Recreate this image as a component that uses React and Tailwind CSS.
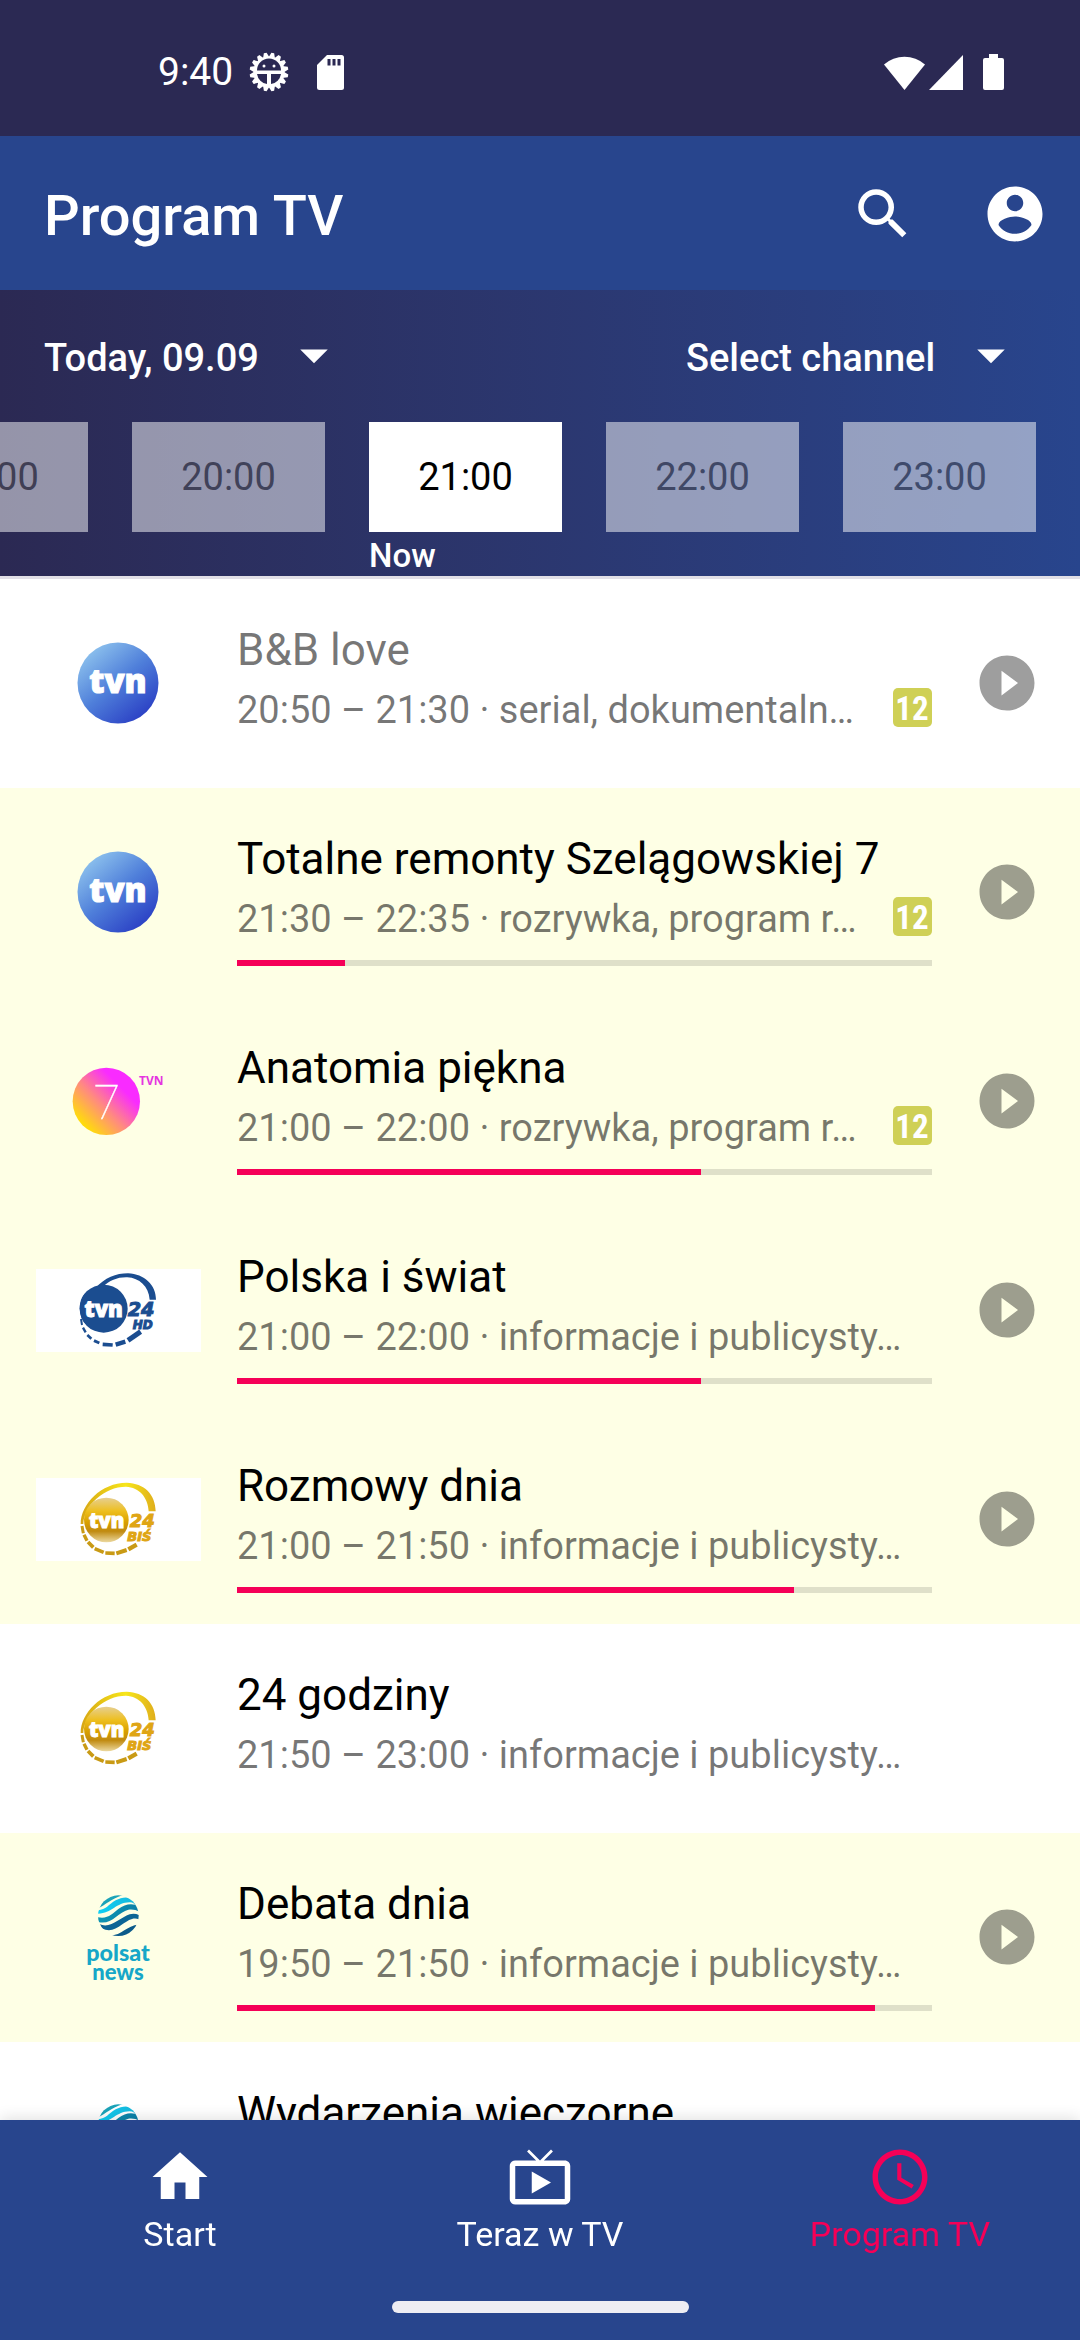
import React from "react";

const PATHS = {
  search:
    "M15.5 14h-.79l-.28-.27A6.471 6.471 0 0 0 16 9.5 6.5 6.5 0 1 0 9.5 16c1.61 0 3.09-.59 4.23-1.57l.27.28v.79l5 4.99L20.49 19l-4.99-5zm-6 0C7.01 14 5 11.99 5 9.5S7.01 5 9.5 5 14 7.01 14 9.5 11.99 14 9.5 14z",
  account:
    "M12 2C6.48 2 2 6.48 2 12s4.48 10 10 10 10-4.48 10-10S17.52 2 12 2zm0 3c1.66 0 3 1.34 3 3s-1.34 3-3 3-3-1.34-3-3 1.34-3 3-3zm0 14.2c-2.5 0-4.71-1.28-6-3.22.03-1.99 4-3.08 6-3.08 1.99 0 5.97 1.09 6 3.08-1.29 1.94-3.5 3.22-6 3.22z",
  dropDown: "M7 10l5 5 5-5z",
  play: "M12 2C6.48 2 2 6.48 2 12s4.48 10 10 10 10-4.48 10-10S17.52 2 12 2zm-2 14.5v-9l6 4.5-6 4.5z",
  home: "M10 20v-6h4v6h5v-8h3L12 3 2 12h3v8z",
  tv: "M21 6h-7.59l3.29-3.29L16 2l-4 4-4-4-.7.71L10.59 6H3c-1.1 0-2 .89-2 2v12c0 1.1.9 2 2 2h18c1.1 0 2-.9 2-2V8c0-1.11-.9-2-2-2zm0 14H3V8h18v12zM9 10v8l7-4z",
  clock:
    "M11.99 2C6.47 2 2 6.48 2 12s4.47 10 9.99 10C17.52 22 22 17.52 22 12S17.52 2 11.99 2zM12 20c-4.42 0-8-3.58-8-8s3.58-8 8-8 8 3.58 8 8-3.58 8-8 8zm.5-13H11v6l5.25 3.15.75-1.23-4.5-2.67z",
};

function Icon({ name, className = "" }) {
  return (
    <svg viewBox="0 0 24 24" className={`size-[66px] fill-current ${className}`} aria-hidden="true">
      <path d={PATHS[name]} />
    </svg>
  );
}

/* ---------- status bar ---------- */

function GearIcon() {
  const teeth = Array.from({ length: 16 }, (_, i) => i * 22.5 + 11.25);
  return (
    <svg viewBox="-20 -20 40 40" className="size-10" aria-hidden="true">
      <g fill="#fff">
        {teeth.map((a) => (
          <path key={a} d="M-3.4 -14 L-1.4 -19.4 H1.4 L3.4 -14Z" transform={`rotate(${a})`} />
        ))}
        <circle r="15.5" />
      </g>
      <path d="M-12 -1.5 A12 12 0 0 1 12 -1.5Z" fill="#2b2953" />
      <path d="M-12 2 H-2 V12 A12 12 0 0 1 -12 2Z" fill="#2b2953" />
      <path d="M12 2 H2 V12 A12 12 0 0 0 12 2Z" fill="#2b2953" />
      <circle cx="-5" cy="-6" r="1.5" fill="#fff" />
      <circle cx="5" cy="-6" r="1.5" fill="#fff" />
    </svg>
  );
}

function StatusBar() {
  return (
    <div className="flex h-[136px] shrink-0 items-center justify-between bg-[#2b2953] pt-2 pr-[76px] pl-[158px] text-white">
      <div className="flex items-center">
        <span className="text-[39px] leading-none">9:40</span>
        <span className="ml-4">
          <GearIcon />
        </span>
        <svg viewBox="0 0 27 35" className="ml-7 h-[35px] w-[27px]" aria-hidden="true">
          <path d="M10 0H24.5A2.5 2.5 0 0 1 27 2.5V32.5A2.5 2.5 0 0 1 24.5 35H2.5A2.5 2.5 0 0 1 0 32.5V10Z" fill="#fff" />
          <path d="M10.5 4h3v6.5h-3zM15.5 4h3v6.5h-3zM20.5 4h3v6.5h-3z" fill="#2b2953" />
        </svg>
      </div>
      <div className="flex items-center">
        <svg viewBox="0 0 41 35" className="h-[35px] w-[41px]" aria-hidden="true">
          <path d="M20.5 35L0 9.5A31 31 0 0 1 41 9.5Z" fill="#fff" />
        </svg>
        <svg viewBox="0 0 34 35" className="ml-1 h-[35px] w-[34px]" aria-hidden="true">
          <path d="M34 0V35H0Z" fill="#fff" />
        </svg>
        <svg viewBox="0 0 21 36" className="ml-5 h-9 w-[21px]" aria-hidden="true">
          <path d="M6 0h9v4h4a2 2 0 0 1 2 2v28a2 2 0 0 1-2 2H2a2 2 0 0 1-2-2V6a2 2 0 0 1 2-2h4z" fill="#fff" />
        </svg>
      </div>
    </div>
  );
}

/* ---------- channel logos ---------- */

function TvnLogo() {
  return (
    <svg viewBox="0 0 165 96" className="h-24 w-[165px]" role="img" aria-label="TVN">
      <defs>
        <linearGradient id="tvnFill" x1="0.1" y1="0.1" x2="0.8" y2="0.95">
          <stop offset="0" stopColor="#8fc4ee" />
          <stop offset="0.5" stopColor="#4f7fda" />
          <stop offset="1" stopColor="#2a3fc4" />
        </linearGradient>
      </defs>
      <circle cx="82" cy="47" r="40.5" fill="url(#tvnFill)" />
      <text
        x="82"
        y="57"
        textAnchor="middle"
        fontFamily="Open Sans"
        fontWeight="800"
        fontSize="33"
        fill="#fff"
        stroke="#fff"
        strokeWidth="1"
      >
        tvn
      </text>
    </svg>
  );
}

function Tvn7Logo() {
  return (
    <svg viewBox="0 0 495 288" className="h-24 w-[165px]" role="img" aria-label="TVN 7">
      <defs>
        <linearGradient id="tvn7Fill" x1="0.22" y1="0.9" x2="0.78" y2="0.35">
          <stop offset="0" stopColor="#ffdb0c" />
          <stop offset="0.5" stopColor="#ff8a80" />
          <stop offset="1" stopColor="#f92bff" />
        </linearGradient>
      </defs>
      <circle cx="211" cy="142" r="101" fill="url(#tvn7Fill)" />
      <text
        x="213"
        y="196"
        textAnchor="middle"
        fontFamily="Roboto"
        fontWeight="100"
        fontSize="145"
        fill="#fff"
        stroke="#fff"
        strokeWidth="1"
      >
        7
      </text>
      <text x="309" y="93" fontFamily="Open Sans" fontWeight="700" fontSize="36" fill="#e535e0">
        TVN
      </text>
    </svg>
  );
}

const DASHES_24 = [
  ["M135 150L138 168", 6],
  ["M141 176L149 190", 7],
  ["M154 198L166 209", 8],
  ["M174 215L190 222", 9],
  ["M200 226L230 228", 11],
  ["M239 227L268 218", 13],
  ["M276 214L314 188", 15],
];

function Tvn24Logo() {
  return (
    <svg viewBox="0 0 495 249" className="h-[83px] w-[165px] bg-white" role="img" aria-label="TVN 24 HD">
      <g fill="#1b4d90">
        <path d="M178 58C206 26 240 13 276 13C325 15 360 48 360 92H341C338 52 310 27 274 25C245 24 221 34 200 54Z" />
        <path d="M131 118C131 95 140 75 158 62L160 170C142 165 134 150 131 118Z" />
        <circle cx="203" cy="119" r="72" />
        {DASHES_24.map(([d, width]) => (
          <path key={d} d={d} stroke="#1b4d90" strokeWidth={width} />
        ))}
        <g fontFamily="DejaVu Sans" fontWeight="700" fontStyle="italic" stroke="#1b4d90" strokeWidth="3">
          <text x="275" y="142" fontSize="58">
            24
          </text>
          <text x="290" y="180" fontSize="36">
            HD
          </text>
        </g>
      </g>
      <text
        x="203"
        y="145"
        textAnchor="middle"
        fontFamily="Open Sans"
        fontWeight="800"
        fontSize="66"
        fill="#fff"
        stroke="#fff"
        strokeWidth="3"
      >
        tvn
      </text>
    </svg>
  );
}

const DASHES_BIS = [
  ["M138 144L142 166", 9],
  ["M144 170L153 188", 10],
  ["M156 192L172 208", 11],
  ["M176 212L203 223", 11],
  ["M208 225L236 226", 11],
  ["M241 226L272 216", 12],
  ["M277 214L302 200", 13],
];

function BisLogo() {
  return (
    <svg viewBox="0 0 495 249" className="h-[83px] w-[165px] bg-white" role="img" aria-label="TVN 24 BiS">
      <defs>
        <linearGradient id="bisBall" x1="0" y1="0" x2="0" y2="1">
          <stop offset="0" stopColor="#e6cf92" />
          <stop offset="0.3" stopColor="#eebf1e" />
          <stop offset="0.55" stopColor="#d9a000" />
          <stop offset="0.75" stopColor="#c08a10" />
          <stop offset="1" stopColor="#ecd9a0" />
        </linearGradient>
        <linearGradient id="bisRing" x1="0" y1="0" x2="1" y2="0">
          <stop offset="0" stopColor="#d6a514" />
          <stop offset="0.6" stopColor="#f7e61a" />
          <stop offset="1" stopColor="#dfae1c" />
        </linearGradient>
      </defs>
      <path
        d="M134 138C134 78 196 14 272 14C325 16 358 48 359 100H338C336 58 310 28 270 26C205 26 144 82 142 138Z"
        fill="url(#bisRing)"
      />
      <circle cx="211" cy="126" r="67" fill="url(#bisBall)" />
      {DASHES_BIS.map(([d, width]) => (
        <path key={d} d={d} stroke="#c99a14" strokeWidth={width} />
      ))}
      <g
        fontFamily="DejaVu Sans"
        fontWeight="700"
        fontStyle="italic"
        fill="#dfa514"
        stroke="#dfa514"
        strokeWidth="3"
      >
        <text x="281" y="148" fontSize="54">
          24
        </text>
        <text x="274" y="188" fontSize="39">
          BIŚ
        </text>
      </g>
      <text
        x="212"
        y="149"
        textAnchor="middle"
        fontFamily="Open Sans"
        fontWeight="800"
        fontSize="61"
        fill="#fff"
        stroke="#fff"
        strokeWidth="3"
      >
        tvn
      </text>
    </svg>
  );
}

function PolsatLogo() {
  return (
    <svg viewBox="0 0 495 288" className="h-24 w-[165px]" role="img" aria-label="Polsat News">
      <defs>
        <clipPath id="globe">
          <circle cx="0" cy="0" r="61" />
        </clipPath>
        <linearGradient id="wave2" x1="0" y1="0" x2="1" y2="0">
          <stop offset="0" stopColor="#0fd0f5" />
          <stop offset="1" stopColor="#17b6da" />
        </linearGradient>
        <linearGradient id="wave3" x1="0" y1="0" x2="1" y2="0">
          <stop offset="0" stopColor="#0f95b2" />
          <stop offset="1" stopColor="#0a7fa8" />
        </linearGradient>
      </defs>
      <g transform="translate(247 77)" clipPath="url(#globe)">
        <path d="M-60 -22C-35 -34 -25 -50 20 -64L-20 -64L-60 -40Z" fill="#1ba3b8" />
        <path d="M-64 -6C-20 -4 -8 -40 34 -40C44 -40 50 -34 56 -26L48 -48C30 -58 10 -56 -8 -46C-30 -33 -38 -16 -64 -16Z" fill="url(#wave2)" />
        <path d="M-64 18C-22 32 -2 -10 30 -18C46 -20 56 -16 66 -10V-24C46 -40 22 -36 0 -20C-18 -6 -32 12 -64 4Z" fill="url(#wave3)" />
        <path d="M-56 26C-22 40 4 6 34 -4C44 -7 56 -6 66 0V12C44 4 34 12 12 26C-10 42 -26 50 -50 38Z" fill="#0c6595" />
        <path d="M-26 60C14 58 24 28 66 26L60 42L24 66H-26Z" fill="#0b5a8a" />
      </g>
      <g fontFamily="Lato" fontWeight="900" fill="#16a7c8" textAnchor="middle">
        <text x="246" y="212" fontSize="70">
          polsat
        </text>
        <text x="246" y="270" fontSize="66">
          news
        </text>
      </g>
    </svg>
  );
}

const LOGOS = { tvn: TvnLogo, tvn7: Tvn7Logo, tvn24: Tvn24Logo, bis: BisLogo, polsat: PolsatLogo };

/* ---------- schedule ---------- */

const HOURS = ["19:00", "20:00", "21:00", "22:00", "23:00"];
const CURRENT_HOUR = "21:00";

const PROGRAMS = [
  { logo: "tvn", title: "B&B love", info: "20:50 – 21:30 · serial, dokumentaln…", age: 12, play: true, past: true },
  { logo: "tvn", title: "Totalne remonty Szelągowskiej 7", info: "21:30 – 22:35 · rozrywka, program r…", age: 12, play: true, progress: 15.5 },
  { logo: "tvn7", title: "Anatomia piękna", info: "21:00 – 22:00 · rozrywka, program r…", age: 12, play: true, progress: 66.8 },
  { logo: "tvn24", title: "Polska i świat", info: "21:00 – 22:00 · informacje i publicysty…", play: true, progress: 66.8 },
  { logo: "bis", title: "Rozmowy dnia", info: "21:00 – 21:50 · informacje i publicysty…", play: true, progress: 80.2 },
  { logo: "bis", title: "24 godziny", info: "21:50 – 23:00 · informacje i publicysty…" },
  { logo: "polsat", title: "Debata dnia", info: "19:50 – 21:50 · informacje i publicysty…", play: true, progress: 91.8 },
  { logo: "polsat", title: "Wydarzenia wieczorne", info: "21:50 – 22:20 · informacje i publicysty…" },
];

function AgeBadge({ age }) {
  return (
    <svg viewBox="0 0 39 39" className="size-[39px] shrink-0" role="img" aria-label={`Od ${age} lat`}>
      <rect width="39" height="39" rx="5" fill="#cfd056" />
      <text
        x="19"
        y="32"
        textAnchor="middle"
        fontFamily="Liberation Sans Narrow, Roboto Condensed, Open Sans, sans-serif"
        fontWeight="700"
        fontSize="33"
        fill="#fff"
      >
        {age}
      </text>
    </svg>
  );
}

function ProgramRow({ program }) {
  const { logo, title, info, age, play, past, progress } = program;
  const Logo = LOGOS[logo];
  const live = progress !== undefined;
  return (
    <li className={`flex items-center pr-10 pl-9 ${live ? "bg-[#feffe5]" : "bg-white"}`}>
      <Logo />
      <div className="ml-9 min-w-0 flex-1 pt-[45px] pb-[31px]">
        <h2 className={`truncate text-[44px] leading-[52px] ${past ? "text-black/54" : "text-black"}`}>{title}</h2>
        <div className="mt-3 flex h-11 items-start justify-between">
          <p className="text-[38px] leading-[44px] whitespace-nowrap text-black/54">{info}</p>
          {age && <AgeBadge age={age} />}
        </div>
        <div className={`mt-[19px] h-1.5 ${live ? "bg-black/12" : ""}`}>
          {live && <div className="h-full bg-[#f50057]" style={{ width: `${progress}%` }} />}
        </div>
      </div>
      <div className="mb-0.5 ml-[42px] size-[66px] shrink-0">
        {play && (
          <button type="button" aria-label={`Odtwórz ${title}`} className="block text-black/38">
            <Icon name="play" />
          </button>
        )}
      </div>
    </li>
  );
}

function DropDown({ label, value }) {
  return (
    <div className="relative flex items-center text-white">
      <select
        aria-label={label}
        defaultValue={value}
        className="h-[66px] cursor-pointer appearance-none bg-transparent pt-1.5 pr-[88px] text-[38px] font-medium outline-none"
      >
        <option value={value} className="text-black">
          {value}
        </option>
      </select>
      <Icon name="dropDown" className="pointer-events-none absolute right-0" />
    </div>
  );
}

function TimeFilter() {
  return (
    <section className="shrink-0 overflow-hidden border-b-[3px] border-[#e1dfe6] bg-linear-to-r from-[#2b2953] to-[#28458d] pt-8">
      <div className="flex items-center justify-between pr-14 pl-11">
        <DropDown label="Day" value="Today, 09.09" />
        <DropDown label="Channel" value="Select channel" />
      </div>
      <div className="mt-[34px] flex items-start justify-end gap-11 pr-11">
        {HOURS.map((hour) => {
          const current = hour === CURRENT_HOUR;
          return (
            <div key={hour} className="w-[193px] shrink-0">
              <button
                type="button"
                className={`h-[110px] w-full bg-white text-[38px] ${current ? "text-black" : "text-[#555] opacity-50"}`}
              >
                {hour}
              </button>
              {current && <p className="mt-1 text-[33px] leading-10 font-medium text-white">Now</p>}
            </div>
          );
        })}
      </div>
    </section>
  );
}

/* ---------- bottom navigation ---------- */

const TABS = [
  { icon: "home", label: "Start" },
  { icon: "tv", label: "Teraz w TV" },
  { icon: "clock", label: "Program TV", active: true },
];

function BottomNav() {
  return (
    <nav className="relative shrink-0 bg-[#28458d] pt-6 pb-[27px] shadow-[0_-2px_14px_rgba(0,0,0,0.12)]">
      <div className="grid grid-cols-3">
        {TABS.map(({ icon, label, active }) => (
          <a
            key={label}
            href="#"
            aria-current={active ? "page" : undefined}
            className={`flex flex-col items-center ${active ? "text-[#f50057]" : "text-white"}`}
          >
            <Icon name={icon} />
            <span className="mt-1 text-[34px] leading-10">{label}</span>
          </a>
        ))}
      </div>
      <div className="mx-auto mt-[47px] h-3 w-[297px] rounded-full bg-[#eeedf3]" />
    </nav>
  );
}

export default function App() {
  return (
    <div className="flex h-screen flex-col overflow-hidden bg-white font-['Roboto',sans-serif]">
      <StatusBar />
      <header className="flex h-[154px] shrink-0 items-center justify-between bg-[#28458d] pt-0.5 pr-8 pl-11 text-white">
        <h1 className="pt-1 text-[56px] leading-none font-medium">Program TV</h1>
        <div className="flex items-center gap-[66px]">
          <button type="button" aria-label="Search">
            <Icon name="search" />
          </button>
          <button type="button" aria-label="Account">
            <Icon name="account" />
          </button>
        </div>
      </header>
      <TimeFilter />
      <ul className="min-h-0 flex-1 overflow-y-auto [scrollbar-width:none]">
        {PROGRAMS.map((program) => (
          <ProgramRow key={program.title} program={program} />
        ))}
      </ul>
      <BottomNav />
    </div>
  );
}
